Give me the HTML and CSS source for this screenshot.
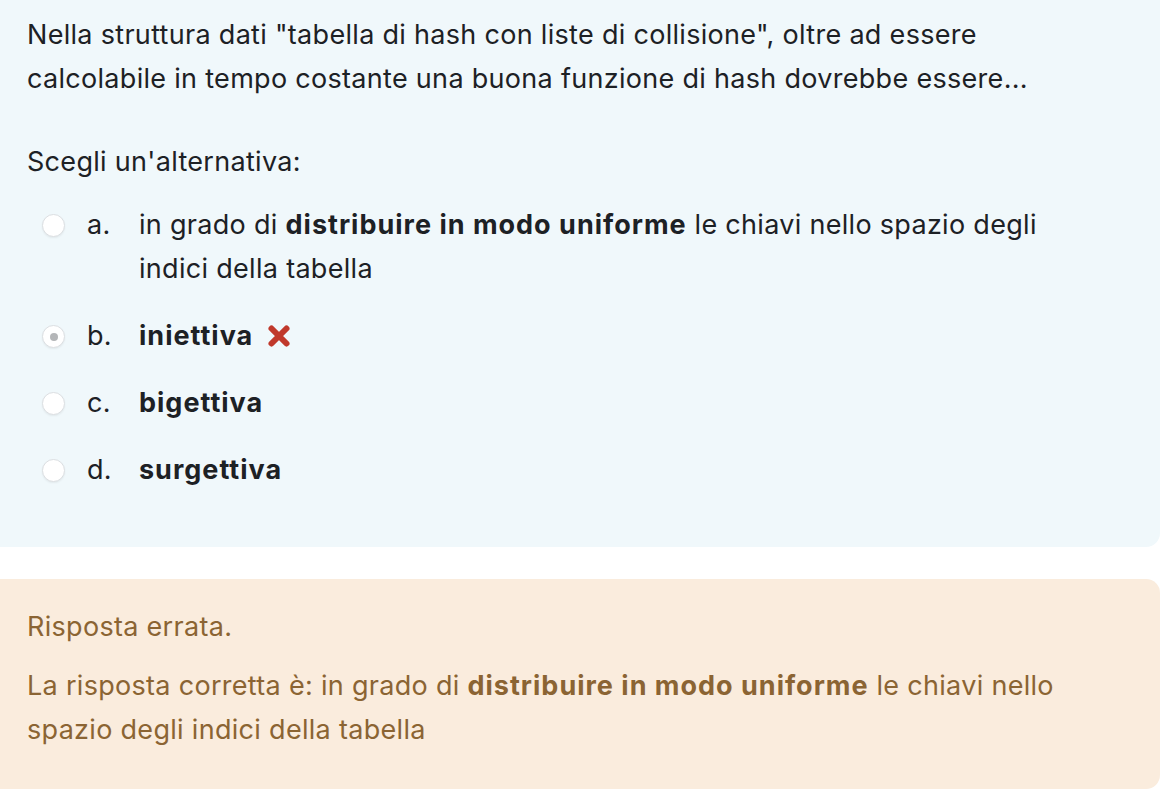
FILE: index.html
```html
<!DOCTYPE html>
<html lang="it">
<head>
<meta charset="utf-8">
<title>Domanda</title>
<link rel="stylesheet" href="styles.css">
</head>
<body>
<div class="formulation">
  <div class="qtext">
    <p>Nella struttura dati "tabella di hash con liste di collisione", oltre ad essere calcolabile in tempo costante una buona funzione di hash dovrebbe essere...</p>
  </div>
  <div class="prompt">Scegli un'alternativa:</div>
  <div class="answer">
    <div class="opt">
      <span class="radio"></span>
      <span class="num">a.</span>
      <span class="text">in grado di <strong>distribuire in modo uniforme</strong> le chiavi nello spazio degli indici della tabella</span>
    </div>
    <div class="opt">
      <span class="radio checked"></span>
      <span class="num">b.</span>
      <span class="text"><strong>iniettiva</strong> <svg class="xicon" viewBox="0 0 24 24" width="24" height="24"><path d="M4.5 4.5 L19.5 19.5 M19.5 4.5 L4.5 19.5" stroke="#c0392b" stroke-width="6" stroke-linecap="round" fill="none"/></svg></span>
    </div>
    <div class="opt">
      <span class="radio"></span>
      <span class="num">c.</span>
      <span class="text"><strong>bigettiva</strong></span>
    </div>
    <div class="opt">
      <span class="radio"></span>
      <span class="num">d.</span>
      <span class="text"><strong>surgettiva</strong></span>
    </div>
  </div>
</div>
<div class="outcome">
  <div class="feedback">Risposta errata.</div>
  <div class="rightanswer">La risposta corretta è: in grado di <strong>distribuire in modo uniforme</strong> le chiavi nello spazio degli indici della tabella</div>
</div>
</body>
</html>
```
FILE: styles.css
```css
html, body {
  margin: 0;
  padding: 0;
  background: #ffffff;
}
body {
  font-family: Inter, "Noto Sans", sans-serif;
  font-size: 27px;
  letter-spacing: 0.3px;
  line-height: 44px;
  color: #1d2125;
}
.formulation {
  background: #f0f8fb;
  border-radius: 0 0 14px 0;
  padding: 13px 75px 55px 27px;
}
.qtext p {
  margin: 0;
}
.prompt {
  margin-top: 39px;
}
.answer {
  margin-top: 19px;
  display: flex;
  flex-direction: column;
  gap: 23px;
}
.opt {
  display: flex;
  align-items: flex-start;
}
.radio {
  flex: none;
  width: 23px;
  height: 23px;
  border-radius: 50%;
  border: 1px solid #dcdfe2;
  background: #fff;
  box-sizing: border-box;
  margin: 11px 0 0 15px;
  box-shadow: 0 1px 2px rgba(0,0,0,0.06);
  display: flex;
  align-items: center;
  justify-content: center;
}
.radio.checked::after {
  content: "";
  width: 8px;
  height: 8px;
  border-radius: 50%;
  background: #b4b6b8;
}
.num {
  flex: none;
  width: 52px;
  margin-left: 22px;
}
.text {
  flex: 1;
}
.text strong,
.rightanswer strong {
  font-weight: 700;
  letter-spacing: 1px;
}
.xicon {
  vertical-align: -3px;
  margin-left: 6px;
}
.outcome {
  margin-top: 32px;
  background: #faecdd;
  border-radius: 0 14px 14px 0;
  padding: 26px 75px 37px 27px;
  color: #8b6433;
  height: 210px;
  box-sizing: border-box;
}
.rightanswer {
  margin-top: 15px;
}
```
